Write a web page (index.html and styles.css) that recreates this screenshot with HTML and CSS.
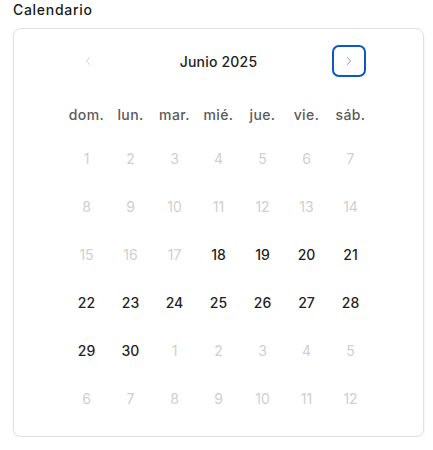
FILE: index.html
```html
<!DOCTYPE html>
<html lang="es">
<head>
<meta charset="utf-8">
<link rel="stylesheet" href="styles.css">
</head>
<body>
<div class="page">
  <div class="label">Calendario</div>
  <div class="card">
    <div class="header">
      <button class="nav nav-prev" aria-label="anterior">
        <svg width="10" height="10" viewBox="0 0 10 10"><path d="M6.5 1.5 L3.5 5 L6.5 8.5" fill="none" stroke="currentColor" stroke-width="1" stroke-linecap="round" stroke-linejoin="round"/></svg>
      </button>
      <div class="month">Junio 2025</div>
      <button class="nav nav-next" aria-label="siguiente">
        <svg width="10" height="10" viewBox="0 0 10 10"><path d="M3.5 1.5 L6.5 5 L3.5 8.5" fill="none" stroke="currentColor" stroke-width="1" stroke-linecap="round" stroke-linejoin="round"/></svg>
      </button>
    </div>
    <div class="grid weekdays">
      <div>dom.</div><div>lun.</div><div>mar.</div><div>mié.</div><div>jue.</div><div>vie.</div><div>sáb.</div>
    </div>
    <div class="grid days">
      <div class="off">1</div><div class="off">2</div><div class="off">3</div><div class="off">4</div><div class="off">5</div><div class="off">6</div><div class="off">7</div>
      <div class="off">8</div><div class="off">9</div><div class="off">10</div><div class="off">11</div><div class="off">12</div><div class="off">13</div><div class="off">14</div>
      <div class="off">15</div><div class="off">16</div><div class="off">17</div><div>18</div><div>19</div><div>20</div><div>21</div>
      <div>22</div><div>23</div><div>24</div><div>25</div><div>26</div><div>27</div><div>28</div>
      <div>29</div><div>30</div><div class="off">1</div><div class="off">2</div><div class="off">3</div><div class="off">4</div><div class="off">5</div>
      <div class="off">6</div><div class="off">7</div><div class="off">8</div><div class="off">9</div><div class="off">10</div><div class="off">11</div><div class="off">12</div>
    </div>
  </div>
</div>
</body>
</html>
```
FILE: styles.css
```css
* { box-sizing: border-box; }
body {
  margin: 0;
  background: #fff;
  font-family: Inter, "Open Sans", sans-serif;
  color: #222;
}
.page {
  padding: 0 9px 0 13px;
}
.label {
  font-size: 14px;
  line-height: 20px;
  font-weight: 500;
  letter-spacing: 0.7px;
  color: #1c1c1c;
  margin-bottom: 8px;
}
.card {
  width: 411px;
  border: 1px solid #e2e2e2;
  border-radius: 8px;
  box-shadow: 0 1px 3px rgba(0, 0, 0, 0.08);
  padding: 16px 0 13px;
}
.header {
  width: 295px;
  margin: 0 auto;
  height: 32px;
  display: flex;
  align-items: center;
  justify-content: space-between;
}
.nav {
  width: 34px;
  height: 32px;
  border: 2px solid transparent;
  border-radius: 7px;
  background: #fff;
  display: flex;
  align-items: center;
  justify-content: center;
  padding: 0;
}
.nav-prev { color: #d4d4d4; }
.nav-next { color: #9a9a9a; border-color: #0b57c7; }
.month {
  font-size: 14px;
  font-weight: 500;
  letter-spacing: 0.2px;
  color: #222;
}
.grid {
  width: 308px;
  margin: 0 auto;
  display: grid;
  grid-template-columns: repeat(7, 44px);
  text-align: center;
  font-size: 14px;
}
.weekdays {
  margin-top: 18px;
}
.weekdays div {
  height: 40px;
  line-height: 40px;
  color: #5a5a5a;
  font-weight: 500;
  letter-spacing: 0.4px;
}
.days div {
  height: 48px;
  line-height: 48px;
  color: #1f1f1f;
  font-weight: 500;
}
.days .off {
  color: #cfcfcf;
  font-weight: 400;
}
```
